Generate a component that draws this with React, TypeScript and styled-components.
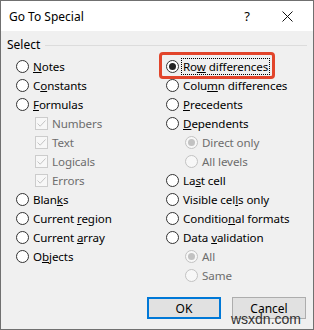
import React from 'react'
import styled, { createGlobalStyle } from 'styled-components'

type Opt = { label: string; key?: number; indent?: boolean; kind: 'radio' | 'check'; checked?: boolean; disabled?: boolean; focus?: boolean }

const left: Opt[] = [
  { label: 'Notes', key: 0, kind: 'radio' },
  { label: 'Constants', key: 1, kind: 'radio' },
  { label: 'Formulas', key: 0, kind: 'radio' },
  { label: 'Numbers', kind: 'check', indent: true, checked: true, disabled: true },
  { label: 'Text', kind: 'check', indent: true, checked: true, disabled: true },
  { label: 'Logicals', kind: 'check', indent: true, checked: true, disabled: true },
  { label: 'Errors', kind: 'check', indent: true, checked: true, disabled: true },
  { label: 'Blanks', key: 4, kind: 'radio' },
  { label: 'Current region', key: 8, kind: 'radio' },
  { label: 'Current array', key: 8, kind: 'radio' },
  { label: 'Objects', key: 1, kind: 'radio' }
]

const right: Opt[] = [
  { label: 'Row differences', key: 2, kind: 'radio', checked: true, focus: true },
  { label: 'Column differences', key: 4, kind: 'radio' },
  { label: 'Precedents', key: 0, kind: 'radio' },
  { label: 'Dependents', key: 0, kind: 'radio' },
  { label: 'Direct only', kind: 'radio', indent: true, checked: true, disabled: true },
  { label: 'All levels', kind: 'radio', indent: true, disabled: true },
  { label: 'Last cell', key: 2, kind: 'radio' },
  { label: 'Visible cells only', key: 11, kind: 'radio' },
  { label: 'Conditional formats', key: 8, kind: 'radio' },
  { label: 'Data validation', key: 5, kind: 'radio' },
  { label: 'All', kind: 'radio', indent: true, checked: true, disabled: true },
  { label: 'Same', kind: 'radio', indent: true, disabled: true }
]

function Label({ opt }: { opt: Opt }) {
  if (opt.key === undefined) return <>{opt.label}</>
  const k = opt.key
  return (
    <>
      {opt.label.slice(0, k)}
      <u>{opt.label[k]}</u>
      {opt.label.slice(k + 1)}
    </>
  )
}

function Option({ opt }: { opt: Opt }) {
  return (
    <Row $indent={opt.indent} $highlight={opt.focus}>
      {opt.kind === 'radio' ? (
        <Radio $disabled={opt.disabled}>{opt.checked && <Dot $disabled={opt.disabled} />}</Radio>
      ) : (
        <Check $disabled={opt.disabled}>
          {opt.checked && (
            <svg width="11" height="11" viewBox="0 0 11 11">
              <polyline points="1.5,5.5 4.2,8.2 9.5,2.5" fill="none" stroke={opt.disabled ? '#c4c4c4' : '#333'} strokeWidth="1" />
            </svg>
          )}
        </Check>
      )}
      <Text $disabled={opt.disabled} $focus={opt.focus}>
        <Label opt={opt} />
      </Text>
    </Row>
  )
}

function App() {
  return (
    <>
      <GlobalStyle />
      <Dialog>
        <TitleBar>
          <Title>Go To Special</Title>
          <Help>?</Help>
          <Close>
            <svg width="11" height="11" viewBox="0 0 11 11">
              <path d="M0.5 0.5 L10.5 10.5 M10.5 0.5 L0.5 10.5" stroke="#111" strokeWidth="1" />
            </svg>
          </Close>
        </TitleBar>
        <Body>
          <GroupHeader>
            <span>Select</span>
            <Rule />
          </GroupHeader>
          <Columns>
            <Column>
              {left.map((o) => (
                <Option key={o.label} opt={o} />
              ))}
            </Column>
            <Column>
              {right.map((o) => (
                <Option key={o.label} opt={o} />
              ))}
            </Column>
          </Columns>
          <Footer>
            <Button $default>OK</Button>
            <Button>Cancel</Button>
          </Footer>
        </Body>
        <Watermark>wsxdn.com</Watermark>
      </Dialog>
    </>
  )
}

const GlobalStyle = createGlobalStyle`
  body {
    margin: 0;
    font-family: 'Noto Sans', 'Liberation Sans', sans-serif;
    font-size: 11.6px;
  }
`

const { Dialog, TitleBar, Title, Help, Close, Body, GroupHeader, Rule, Columns, Column, Row, Radio, Dot, Check, Text, Footer, Button, Watermark } = {
  Dialog: styled.div`
    position: relative;
    width: 314px;
    height: 330px;
    box-sizing: border-box;
    border: 1px solid #707070;
    background: #f0f0f0;
    display: flex;
    flex-direction: column;
    color: #000;
  `,
  TitleBar: styled.div`
    height: 30px;
    background: #fff;
    display: flex;
    align-items: center;
    padding-left: 8px;
  `,
  Title: styled.div`
    flex: 1;
    font-size: 12px;
  `,
  Help: styled.div`
    width: 20px;
    margin-right: 25px;
    text-align: center;
    font-size: 13px;
  `,
  Close: styled.div`
    width: 11px;
    height: 11px;
    margin-right: 20px;
    display: flex;
  `,
  Body: styled.div`
    flex: 1;
    display: flex;
    flex-direction: column;
    padding: 6px 6px 0 6px;
  `,
  GroupHeader: styled.div`
    display: flex;
    align-items: center;
    gap: 5px;
    height: 16px;
    line-height: 16px;
    font-size: 12px;
  `,
  Rule: styled.div`
    flex: 1;
    height: 1px;
    background: #dcdcdc;
  `,
  Columns: styled.div`
    display: grid;
    grid-template-columns: 150px 1fr;
    padding-left: 9px;
    margin-top: 4px;
  `,
  Column: styled.div`
    display: flex;
    flex-direction: column;
  `,
  Row: styled.div<{ $indent?: boolean; $highlight?: boolean }>`
    position: relative;
    height: 19px;
    display: flex;
    align-items: center;
    gap: 4px;
    width: fit-content;
    margin-left: ${({ $indent }) => ($indent ? '19px' : '0')};

    ${({ $highlight }) =>
      $highlight &&
      `
      &::after {
        content: '';
        position: absolute;
        left: -7px;
        right: -5px;
        top: -5px;
        bottom: -3px;
        border: 3.5px solid #e2452b;
        border-radius: 4px;
      }
    `}
  `,
  Radio: styled.span<{ $disabled?: boolean }>`
    width: 13px;
    height: 13px;
    box-sizing: border-box;
    border-radius: 50%;
    border: 1px solid ${({ $disabled }) => ($disabled ? '#c2c2c2' : '#333')};
    background: ${({ $disabled }) => ($disabled ? '#f7f7f7' : '#fff')};
    display: flex;
    align-items: center;
    justify-content: center;
    flex-shrink: 0;
  `,
  Dot: styled.span<{ $disabled?: boolean }>`
    width: 7px;
    height: 7px;
    border-radius: 50%;
    background: ${({ $disabled }) => ($disabled ? '#c2c2c2' : '#222')};
  `,
  Check: styled.span<{ $disabled?: boolean }>`
    width: 13px;
    height: 13px;
    box-sizing: border-box;
    border: 1px solid ${({ $disabled }) => ($disabled ? '#cccccc' : '#333')};
    background: ${({ $disabled }) => ($disabled ? '#f7f7f7' : '#fff')};
    display: flex;
    align-items: center;
    justify-content: center;
    flex-shrink: 0;
  `,
  Text: styled.span<{ $disabled?: boolean; $focus?: boolean }>`
    color: ${({ $disabled }) => ($disabled ? '#6d6d6d' : '#000')};
    white-space: nowrap;
    line-height: 15px;
    padding: 0 1px;
    letter-spacing: -0.1px;
    border: 1px dotted ${({ $focus }) => ($focus ? '#000' : 'transparent')};
    margin-left: -2px;
  `,
  Footer: styled.div`
    margin-top: auto;
    display: flex;
    justify-content: flex-end;
    gap: 11px;
    padding: 0 1px 10px 0;
  `,
  Button: styled.div<{ $default?: boolean }>`
    width: 74px;
    height: 22px;
    box-sizing: border-box;
    background: #e1e1e1;
    border: ${({ $default }) => ($default ? '2px solid #0078d7' : '1px solid #adadad')};
    display: flex;
    align-items: center;
    justify-content: center;
    font-size: 12px;
  `,
  Watermark: styled.div`
    position: absolute;
    right: 12px;
    bottom: 2px;
    font-family: 'Liberation Sans', sans-serif;
    font-size: 14px;
    color: #333;
  `
}

export default App
